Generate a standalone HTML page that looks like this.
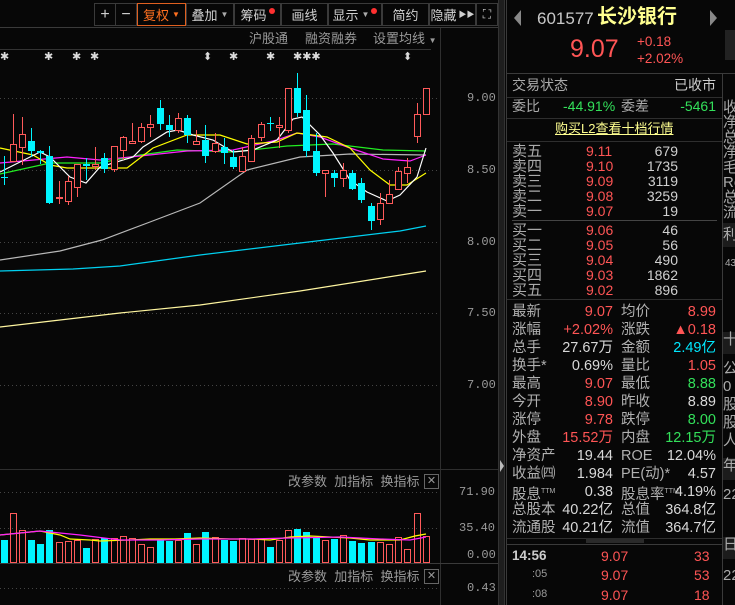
<!DOCTYPE html>
<html><head><meta charset="utf-8">
<style>
*{margin:0;padding:0;box-sizing:border-box}
body{width:735px;height:605px;background:#070707;overflow:hidden;position:relative;font-family:"Liberation Sans","Noto Sans CJK SC",sans-serif;color:#c8c8c8}
.a{position:absolute;white-space:nowrap;line-height:1}
.tb{position:absolute;top:3px;height:23px;border:1px solid #3a3a3a;font-size:13px;color:#d0d0d0;display:flex;align-items:center;justify-content:center}
.r{color:#ff5555}.g{color:#33e05a}.c{color:#00e8ff}.w{color:#d8d8d8}.gr{color:#9a9a9a}
.row{position:absolute;left:512px;width:206px;height:15px;font-size:14px;line-height:15px}
.row span{position:absolute;top:0}
.hl{position:absolute;height:1px;background:#2e2e2e}
.vl{position:absolute;width:1px;background:#2e2e2e}
.st{position:absolute;left:512px;width:206px;font-size:14.5px;line-height:18px;height:18px}
.st span{position:absolute;top:0}
.l1{left:0;color:#b0b0b0}.v1{right:105px}.l2{left:109px;color:#b0b0b0}.v2{right:2px}
</style></head><body>

<div class="tb" style="left:94px;width:22px;font-size:16px">+</div>
<div class="tb" style="left:115px;width:22px;font-size:16px">−</div>
<div class="tb" style="left:137px;width:49px;border-color:#e06020;color:#ff7020">复权 <span style="font-size:8px;margin-left:3px">▼</span></div>
<div class="tb" style="left:186px;width:48px">叠加 <span style="font-size:8px;margin-left:3px;color:#aaa">▼</span></div>
<div class="tb" style="left:234px;width:47px">筹码<span style="display:inline-block;width:6px;height:6px;border-radius:3px;background:#ff3030;margin:-8px 0 0 2px"></span></div>
<div class="tb" style="left:281px;width:47px">画线</div>
<div class="tb" style="left:328px;width:54px">显示 <span style="font-size:8px;margin-left:3px;color:#aaa">▼</span><span style="display:inline-block;width:6px;height:6px;border-radius:3px;background:#ff3030;margin:-8px 0 0 2px"></span></div>
<div class="tb" style="left:382px;width:47px">简约</div>
<div class="tb" style="left:429px;width:47px">隐藏 <span style="font-size:8px;margin-left:2px">▶▶</span></div>
<div class="tb" style="left:476px;width:22px;font-size:12px">⛶</div>
<div class="hl" style="left:0;top:27px;width:505px;background:#3a3a3a"></div>

<div class="a gr" style="left:249px;top:32px;font-size:13px">沪股通</div>
<div class="a gr" style="left:305px;top:32px;font-size:13px">融资融券</div>
<div class="a gr" style="left:373px;top:32px;font-size:13px">设置均线 <span style="font-size:8px">▼</span></div>
<div class="hl" style="left:0;top:49px;width:431px;background:#333"></div>

<svg class="a" style="left:0;top:0" width="505" height="605">
<g stroke="#444" stroke-dasharray="1,3" stroke-width="1">
<line x1="0" y1="98.5" x2="440" y2="98.5"/><line x1="0" y1="170.5" x2="440" y2="170.5"/><line x1="0" y1="242.5" x2="440" y2="242.5"/><line x1="0" y1="313.5" x2="440" y2="313.5"/><line x1="0" y1="385.5" x2="440" y2="385.5"/>
<line x1="0" y1="492.5" x2="440" y2="492.5"/><line x1="0" y1="528.5" x2="440" y2="528.5"/><line x1="0" y1="588.5" x2="440" y2="588.5"/>
</g>
<line x1="440.5" y1="28" x2="440.5" y2="605" stroke="#2e2e2e"/>
<line x1="0" y1="469.5" x2="498" y2="469.5" stroke="#2e2e2e"/>
<line x1="0" y1="563.5" x2="498" y2="563.5" stroke="#3a3a3a"/>
<g fill="none" stroke-width="1.2">
<polyline stroke="#fff6a0" points="0,327 120,313 200,305 300,291 426,271"/>
<polyline stroke="#00d0f0" points="0,271 73,269 120,266 200,255 300,243 400,231 426,226"/>
<polyline stroke="#b8b8b8" points="0,260 60,251 102,240 150,222 200,203 247,170 300,157 350,154 426,155"/>
<polyline stroke="#22ee22" points="0,174 50,163 100,163 140,155 177,150 233,152 287,146 333,144 383,150 426,151"/>
<polyline stroke="#ff20ff" points="0,163 67,157 100,160 140,156 187,151 233,150 277,140 297,133 320,137 350,148 383,159 410,161 426,155"/>
<polyline stroke="#ffff00" points="0,148 33,155 50,165 67,168 127,168 153,148 187,135 220,135 247,144 277,142 297,133 327,137 350,148 370,170 390,185 407,185 426,173"/>
<polyline stroke="#ffffff" points="0,172 40,152 50,157 70,177 86,183 100,167 133,157 143,147 167,132 178,130 193,135 213,140 233,152 253,150 277,140 293,119 302,117 320,135 333,153 350,180 367,192 387,201 400,195 417,177 426,148"/>
</g>
<g id="cd"></g>
<g id="vb"></g>
<g fill="none" stroke-width="1.2">
<polyline stroke="#ffff00" points="0,535 20,533 40,531 60,535 70,539 90,540 100,541 130,540 150,539 175,539 200,538 230,539 250,539 270,540 290,537 310,536 330,537 350,538 370,540 400,540 415,536 426,534"/>
<polyline stroke="#ff20ff" points="0,535 20,533 40,531 60,533 80,535 120,540 160,540 200,539 250,539 290,538 340,537 380,539 410,540 426,537"/>
</g>
</svg>

<div class="a" style="left:0;top:52px;font-size:11px;color:#ddd">✱</div>
<div class="a" style="left:44px;top:52px;font-size:11px;color:#ddd">✱</div>
<div class="a" style="left:72px;top:52px;font-size:11px;color:#ddd">✱</div>
<div class="a" style="left:90px;top:52px;font-size:11px;color:#ddd">✱</div>
<div class="a" style="left:203px;top:52px;font-size:11px;color:#ddd">⬍</div>
<div class="a" style="left:229px;top:52px;font-size:11px;color:#ddd">✱</div>
<div class="a" style="left:266px;top:52px;font-size:11px;color:#ddd">✱</div>
<div class="a" style="left:293px;top:52px;font-size:11px;color:#ddd">✱✱✱</div>
<div class="a" style="left:403px;top:52px;font-size:11px;color:#ddd">⬍</div>

<div class="a gr" style="left:467px;top:92px;font-size:12px;font-family:'Liberation Mono',monospace">9.00</div>
<div class="a gr" style="left:467px;top:164px;font-size:12px;font-family:'Liberation Mono',monospace">8.50</div>
<div class="a gr" style="left:467px;top:236px;font-size:12px;font-family:'Liberation Mono',monospace">8.00</div>
<div class="a gr" style="left:467px;top:307px;font-size:12px;font-family:'Liberation Mono',monospace">7.50</div>
<div class="a gr" style="left:467px;top:379px;font-size:12px;font-family:'Liberation Mono',monospace">7.00</div>
<div class="a gr" style="left:459px;top:486px;font-size:12px;font-family:'Liberation Mono',monospace">71.90</div>
<div class="a gr" style="left:459px;top:522px;font-size:12px;font-family:'Liberation Mono',monospace">35.40</div>
<div class="a gr" style="left:467px;top:549px;font-size:12px;font-family:'Liberation Mono',monospace">0.00</div>
<div class="a gr" style="left:467px;top:582px;font-size:12px;font-family:'Liberation Mono',monospace">0.43</div>

<div class="a gr" style="left:288px;top:475px;font-size:13px">改参数 &nbsp;加指标 &nbsp;换指标</div>
<div class="a" style="left:424px;top:474px;width:15px;height:15px;border:1px solid #666;color:#999;font-size:11px;text-align:center;line-height:13px">✕</div>
<div class="a gr" style="left:288px;top:570px;font-size:13px">改参数 &nbsp;加指标 &nbsp;换指标</div>
<div class="a" style="left:424px;top:569px;width:15px;height:15px;border:1px solid #666;color:#999;font-size:11px;text-align:center;line-height:13px">✕</div>

<div class="a" style="left:498px;top:0;width:7px;height:605px;background:#1e1e1e;border-left:1px solid #333;border-right:1px solid #333"></div>
<div class="a" style="left:500px;top:460px;width:0;height:0;border-left:4px solid #bbb;border-top:6px solid transparent;border-bottom:6px solid transparent"></div>
<div class="vl" style="left:506px;top:0;height:605px;background:#3a3a3a"></div>
<div class="vl" style="left:722px;top:73px;height:532px;background:#3a3a3a"></div>

<div class="a" style="left:514px;top:10px;width:0;height:0;border-right:7px solid #888;border-top:8px solid transparent;border-bottom:8px solid transparent"></div>
<div class="a" style="left:710px;top:10px;width:0;height:0;border-left:7px solid #888;border-top:8px solid transparent;border-bottom:8px solid transparent"></div>
<div class="a" style="left:537px;top:10px;font-size:17px;color:#c8c8c8">601577</div>
<div class="a" style="left:597px;top:7px;font-size:20px;color:#ffff90;font-weight:bold">长沙银行</div>
<div class="a r" style="left:570px;top:37px;font-size:25px">9.07</div>
<div class="a r" style="left:637px;top:35px;font-size:13.5px">+0.18</div>
<div class="a r" style="left:637px;top:52px;font-size:13.5px">+2.02%</div>
<div class="hl" style="left:507px;top:73px;width:228px;background:#3a3a3a"></div>

<div class="row" style="top:78px"><span style="left:0;color:#aaa">交易状态</span><span style="right:2px;color:#ccc">已收市</span></div>
<div class="hl" style="left:507px;top:97px;width:215px"></div>
<div class="row" style="top:99px"><span style="left:0;color:#aaa">委比</span><span class="g" style="left:51px">-44.91%</span><span style="left:109px;color:#aaa">委差</span><span class="g" style="right:2px">-5461</span></div>
<div class="hl" style="left:507px;top:118px;width:215px"></div>
<div class="a" style="left:555px;top:122px;font-size:13px;color:#ffff90;text-decoration:underline">购买L2查看十档行情</div>
<div class="hl" style="left:507px;top:141px;width:215px"></div>

<div id="ob"></div>
<div class="hl" style="left:512px;top:220px;width:205px;background:#444"></div>
<div class="hl" style="left:507px;top:299px;width:215px"></div>

<div id="stats"></div>
<div class="hl" style="left:507px;top:538px;width:215px"></div>
<div class="a" style="left:586px;top:538px;width:58px;height:5px;background:#2a2a2a"></div>
<div class="hl" style="left:507px;top:544px;width:215px;background:#3a3a3a"></div>
<div class="a w" style="left:512px;top:549px;font-size:13.5px;font-weight:bold;color:#ccc">14:56</div>
<div class="a gr" style="left:532px;top:569px;font-size:11px">:05</div>
<div class="a gr" style="left:532px;top:589px;font-size:11px">:08</div>
<div class="a r" style="left:601px;top:549px;font-size:14px">9.07</div>
<div class="a r" style="left:601px;top:568px;font-size:14px">9.07</div>
<div class="a r" style="left:601px;top:588px;font-size:14px">9.07</div>
<div class="a r" style="left:694px;top:549px;font-size:14px">33</div>
<div class="a r" style="left:694px;top:568px;font-size:14px">53</div>
<div class="a r" style="left:694px;top:588px;font-size:14px">18</div>

<div class="a" style="left:723px;top:0;width:12px;height:605px;overflow:hidden;color:#aaa;font-size:15px">
<div class="a" style="left:2px;top:30px;width:10px;height:30px;background:#222"></div>
<div class="a" style="left:0;top:100px;line-height:15px">收</div>
<div class="a" style="left:0;top:115px;line-height:15px">净</div>
<div class="a" style="left:0;top:130px;line-height:15px">总</div>
<div class="a" style="left:0;top:145px;line-height:15px">净</div>
<div class="a" style="left:0;top:160px;line-height:15px">毛</div>
<div class="a" style="left:0;top:175px;line-height:15px">Ro</div>
<div class="a" style="left:0;top:190px;line-height:15px">总</div>
<div class="a" style="left:0;top:205px;line-height:15px">流</div>
<div class="a" style="left:0;top:223px;height:24px;width:14px;background:#1c1c1c;line-height:24px">利</div>
<div class="a" style="left:2px;top:258px;font-size:10px;line-height:12px;white-space:normal;width:8px">43210</div>
<div class="a" style="left:0;top:332px;height:22px;width:14px;background:#1c1c1c">十</div>
<div class="a" style="left:0;top:360px;line-height:18px;white-space:normal;width:14px">公0股股人</div>
<div class="a" style="left:0;top:458px;height:22px;width:14px;background:#1c1c1c">年</div>
<div class="a" style="left:0;top:485px;line-height:20px;white-space:normal;width:10px">222</div>
<div class="a" style="left:0;top:537px;height:22px;width:14px;background:#1c1c1c">日</div>
<div class="a" style="left:0;top:565px;line-height:22px;white-space:normal;width:10px">22</div>
</div>

<script>
var C=[[4,156,185,177,177,'c',540],[13,114,161,144,161,'r',513],[22,117,165,134,147,'r',530],[31,128,157,141,151,'c',540],[40,150,164,151,153,'c',544],[49,146,204,156,203,'c',530],[59,181,204,197,197,'r',542],[68,176,205,181,201,'r',541],[77,164,197,164,187,'r',540],[86,158,180,164,166,'c',548],[95,147,170,164,166,'r',539],[104,153,173,158,169,'c',538],[114,146,172,146,169,'r',538],[123,136,160,137,150,'r',536],[132,123,143,141,143,'r',538],[141,123,143,127,141,'r',544],[150,115,137,124,127,'r',547],[160,100,130,108,124,'c',539],[169,115,137,125,130,'c',541],[178,113,133,118,130,'r',540],[187,115,143,118,135,'c',533],[196,130,145,141,144,'r',544],[205,125,163,140,156,'c',532],[215,133,153,143,151,'r',537],[224,138,164,147,153,'c',540],[233,150,169,157,167,'c',541],[242,147,171,156,171,'r',538],[251,135,162,138,161,'r',539],[261,122,141,124,137,'r',539],[270,117,131,123,123,'c',547],[279,117,148,125,127,'r',540],[288,88,133,88,130,'r',530],[297,73,117,88,113,'c',529],[306,95,157,110,151,'c',532],[316,133,176,151,173,'c',538],[325,170,197,170,173,'r',540],[334,170,187,173,178,'c',539],[343,163,187,170,178,'r',535],[352,170,190,173,189,'c',541],[361,178,203,183,200,'c',543],[371,203,230,206,221,'c',542],[380,193,225,203,219,'r',542],[389,180,203,194,203,'r',544],[398,167,190,171,189,'r',537],[407,158,183,167,173,'r',549],[417,103,143,114,136,'r',513],[426,88,115,88,114,'r',536]];
var s='',v='';
C.forEach(function(d){var x=d[0],red=d[5]=='r',col=red?'#ff5a5a':'#00f5ff';
s+='<line x1="'+(x+.5)+'" y1="'+d[1]+'" x2="'+(x+.5)+'" y2="'+d[2]+'" stroke="'+col+'"/>';
var h=Math.max(1,d[4]-d[3]);
if(red)s+='<rect x="'+(x-2.5)+'" y="'+(d[3]+.5)+'" width="6" height="'+h+'" fill="#070707" stroke="'+col+'"/>';
else s+='<rect x="'+(x-3)+'" y="'+d[3]+'" width="7" height="'+h+'" fill="'+col+'"/>';
var vh=562-d[6];
if(red)v+='<rect x="'+(x-2.5)+'" y="'+(d[6]+.5)+'" width="6" height="'+vh+'" fill="none" stroke="'+col+'"/>';
else v+='<rect x="'+(x-3)+'" y="'+d[6]+'" width="7" height="'+(vh+1)+'" fill="'+col+'"/>';});
document.getElementById('cd').innerHTML=s;document.getElementById('vb').innerHTML=v;
var ob=[['卖五','9.11','679'],['卖四','9.10','1735'],['卖三','9.09','3119'],['卖二','9.08','3259'],['卖一','9.07','19']];
var bb=[['买一','9.06','46'],['买二','9.05','56'],['买三','9.04','490'],['买四','9.03','1862'],['买五','9.02','896']];
var h='';
function r(a,t){return '<div class="row" style="top:'+t+'px"><span style="left:0;color:#aaa;font-size:15px">'+a[0]+'</span><span class="r" style="left:74px">'+a[1]+'</span><span style="right:40px;color:#d0d0d0">'+a[2]+'</span></div>';}
ob.forEach(function(a,i){h+=r(a,144+i*15);});bb.forEach(function(a,i){h+=r(a,223+i*15);});
document.getElementById('ob').innerHTML=h;
var S=[['最新','9.07','r','均价','8.99','r'],['涨幅','+2.02%','r','涨跌','▲0.18','r'],['总手','27.67万','w','金额','2.49亿','c'],['换手*','0.69%','w','量比','1.05','r'],['最高','9.07','r','最低','8.88','g'],['今开','8.90','r','昨收','8.89','w'],['涨停','9.78','r','跌停','8.00','g'],['外盘','15.52万','r','内盘','12.15万','g'],['净资产','19.44','w','ROE','12.04%','w'],['收益㈣','1.984','w','PE(动)*','4.57','w'],['股息<sup style="font-size:7px">TTM</sup>','0.38','w','股息率<sup style="font-size:7px">TTM</sup>','4.19%','w'],['总股本','40.22亿','w','总值','364.8亿','w'],['流通股','40.21亿','w','流值','364.7亿','w']];
var q='';S.forEach(function(a,i){q+='<div class="st" style="top:'+(303+i*18)+'px"><span class="l1">'+a[0]+'</span><span class="v1 '+a[2]+'">'+a[1]+'</span><span class="l2">'+a[3]+'</span><span class="v2 '+a[5]+'">'+a[4]+'</span></div>';});
document.getElementById('stats').innerHTML=q;
</script>
</body></html>
